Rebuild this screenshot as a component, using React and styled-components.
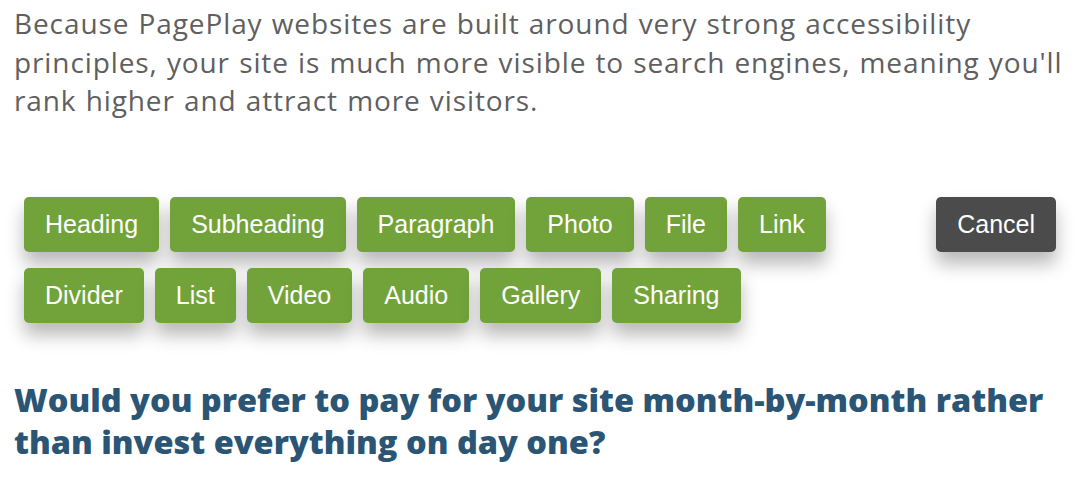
import React from 'react'
import styled, { createGlobalStyle } from 'styled-components'

const GlobalStyle = createGlobalStyle`
  body {
    margin: 0;
    background: #ffffff;
  }
`

const greenButtons = [
  'Heading', 'Subheading', 'Paragraph', 'Photo', 'File', 'Link',
  'Divider', 'List', 'Video', 'Audio', 'Gallery', 'Sharing'
]

function App () {
  return (
    <Page>
      <GlobalStyle />
      <Intro>
        Because PagePlay websites are built around very strong accessibility<br />
        principles, your site is much more visible to search engines, meaning you'll<br />
        rank higher and attract more visitors.
      </Intro>

      <Toolbar>
        <ButtonGroup>
          {greenButtons.map(label => (
            <BlockButton key={label}>{label}</BlockButton>
          ))}
        </ButtonGroup>
        <BlockButton dark>Cancel</BlockButton>
      </Toolbar>

      <Question>
        Would you prefer to pay for your site month-by-month rather<br />
        than invest everything on day one?
      </Question>
    </Page>
  )
}

const Page = styled.div`
  padding: 0 14px;
`

const Intro = styled.p`
  margin: 0;
  padding-top: 4px;
  font-family: 'Open Sans', Lato, sans-serif;
  font-size: 28px;
  line-height: 38.5px;
  letter-spacing: 0.9px;
  word-spacing: 1px;
  color: #5f5f5f;
  white-space: nowrap;
`

const Toolbar = styled.div`
  display: flex;
  justify-content: space-between;
  align-items: flex-start;
  margin-top: 77px;
  padding: 0 14px 0 10px;
`

const ButtonGroup = styled.div`
  display: flex;
  flex-wrap: wrap;
  column-gap: 11px;
  row-gap: 16px;
  width: 830px;
`

const BlockButton = styled.button`
  height: 55px;
  padding: 0 21px;
  border: none;
  border-radius: 5px;
  background: ${props => props.dark ? '#4b4b4b' : '#71a33a'};
  color: #ffffff;
  font-family: 'Liberation Sans', Arial, sans-serif;
  font-size: 25px;
  box-shadow: 0 12px 18px rgba(0, 0, 0, 0.28);
  cursor: pointer;
`

const Question = styled.h2`
  margin: 56px 0 0;
  font-family: 'Open Sans', Lato, sans-serif;
  font-weight: 800;
  font-size: 32.5px;
  line-height: 42px;
  color: #2a5574;
  white-space: nowrap;
`

export default App
